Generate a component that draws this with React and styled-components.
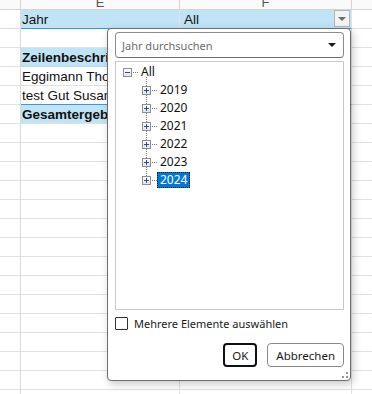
import React from 'react';
import styled, { createGlobalStyle } from 'styled-components';

const GlobalStyle = createGlobalStyle`
  html, body {
    margin: 0;
    padding: 0;
    background: #fff;
    overflow: hidden;
  }
  body {
    width: 372px;
    height: 394px;
  }
  * { box-sizing: border-box; }
`;

const years = ['2019', '2020', '2021', '2022', '2023', '2024'];

const rows = [
  { e: 'Jahr', f: 'All', fill: true, line: true, filter: true },
  { e: '' },
  { e: 'Zeilenbeschriftungen', fill: true, bold: true, soft: true },
  { e: 'Eggimann Thomas' },
  { e: 'test Gut Susanne', line: true },
  { e: 'Gesamtergebnis', fill: true, bold: true },
];

const App = () => {
  const emptyRows = Array.from({ length: 16 });

  return (
    <>
      <GlobalStyle />
      <Sheet>
        <Corner />
        <ColHead><span>E</span></ColHead>
        <ColHead><span>F</span></ColHead>
        <ColHead $last />

        {rows.map((r, i) => (
          <React.Fragment key={i}>
            <RowHead />
            <Cell $fill={r.fill} $bold={r.bold} $line={r.line} $soft={r.soft}>
              {r.e}
            </Cell>
            <Cell $fill={r.fill && r.f} $line={r.line} $pad={4}>
              {r.f}
              {r.filter && <FilterButton><Caret $color='#6a6a6a' /></FilterButton>}
            </Cell>
            <Cell $last />
          </React.Fragment>
        ))}

        {emptyRows.map((_, i) => (
          <React.Fragment key={'x' + i}>
            <RowHead />
            <Cell />
            <Cell />
            <Cell $last />
          </React.Fragment>
        ))}

        <Popup>
          <Search>
            <Placeholder>Jahr durchsuchen</Placeholder>
            <Caret $color='#1a1a1a' />
          </Search>

          <TreeBox>
            <TreeRow>
              <Expander $open />
              <Dots />
              <Label>All</Label>
            </TreeRow>
            <Children>
              {years.map((y) => (
                <TreeRow key={y} $indent>
                  <Expander />
                  <Dots />
                  <Label $selected={y === '2024'}>{y}</Label>
                </TreeRow>
              ))}
            </Children>
          </TreeBox>

          <CheckRow>
            <Check />
            <span>Mehrere Elemente auswählen</span>
          </CheckRow>

          <Buttons>
            <Button $primary>OK</Button>
            <Button>Abbrechen</Button>
          </Buttons>

          <Grip>
            <i /><i /><i />
          </Grip>
        </Popup>
      </Sheet>
    </>
  );
};

const Sheet = styled.div`
  position: relative;
  display: grid;
  grid-template-columns: 21px 159px 172px 1fr;
  grid-template-rows: 10px;
  grid-auto-rows: 19px;
  width: 372px;
  height: 394px;
  overflow: hidden;
  font-family: 'Liberation Sans', Arial, sans-serif;
`;

const Corner = styled.div`
  border-right: 1px solid #d4d4d4;
  border-bottom: 1px solid #d4d4d4;
  background: #fafafa;
`;

const ColHead = styled.div`
  display: flex;
  align-items: flex-end;
  justify-content: center;
  overflow: hidden;
  background: #fafafa;
  border-right: ${(p) => (p.$last ? 'none' : '1px solid #d4d4d4')};
  border-bottom: 1px solid #d4d4d4;
  color: #555;
  font-size: 13px;

  span {
    line-height: 14px;
    margin-bottom: -1px;
  }
`;

const RowHead = styled.div`
  border-right: 1px solid #dadada;
  border-bottom: 1px solid #e1e1e1;
`;

const Cell = styled.div`
  position: relative;
  display: flex;
  align-items: center;
  padding: 1px 0 0 ${(p) => p.$pad ?? 1}px;
  white-space: nowrap;
  overflow: hidden;
  font-size: 13.5px;
  font-weight: ${(p) => (p.$bold ? 700 : 400)};
  color: #111;
  background: ${(p) => (p.$fill ? '#c0e4f5' : '#fff')};
  border-right: ${(p) => (p.$last ? 'none' : '1px solid #e1e1e1')};
  border-bottom: 1px solid
    ${(p) => (p.$line ? '#3a9ad9' : p.$soft ? '#b5d9ee' : '#e1e1e1')};
`;

const FilterButton = styled.div`
  position: absolute;
  right: 1px;
  top: 0;
  width: 16px;
  height: 17px;
  display: flex;
  align-items: center;
  justify-content: center;
  background: #f3f3f3;
  border: 1px solid #b4b4b4;
`;

const Caret = styled.div`
  width: 0;
  height: 0;
  border-left: 4px solid transparent;
  border-right: 4px solid transparent;
  border-top: 4px solid ${(p) => p.$color};
`;

const Popup = styled.div`
  position: absolute;
  left: 107px;
  top: 28px;
  width: 244px;
  height: 353px;
  display: flex;
  flex-direction: column;
  padding: 3px 6px 0 7px;
  background: #fff;
  border: 1px solid #6e6e6e;
  border-radius: 4px;
  box-shadow: 2px 3px 8px rgba(0, 0, 0, 0.22);
  font-family: 'Noto Sans', 'Open Sans', sans-serif;
  font-size: 11px;
  color: #1a1a1a;
`;

const Search = styled.div`
  height: 26px;
  display: flex;
  align-items: center;
  justify-content: space-between;
  padding: 0 7px 0 6px;
  border: 1px solid #8d8d8d;
  border-bottom-color: #6f6f6f;
  border-radius: 4px;
`;

const Placeholder = styled.span`
  color: #6b6b6b;
`;

const TreeBox = styled.div`
  margin-top: 3px;
  height: 249px;
  padding: 1px 0 0 7px;
  border: 1px solid #c9c9c9;
`;

const TreeRow = styled.div`
  height: 18px;
  display: flex;
  align-items: center;
  padding-left: ${(p) => (p.$indent ? 19 : 0)}px;
`;

const Children = styled.div`
  position: relative;

  &::before {
    content: '';
    position: absolute;
    left: 23px;
    top: -4px;
    bottom: 9px;
    border-left: 1px dotted #7a7a7a;
  }
`;

const Expander = styled.div`
  position: relative;
  z-index: 1;
  width: 9px;
  height: 9px;
  flex: none;
  border: 1px solid #8f8f8f;
  background: linear-gradient(#ffffff, #e4e4e4);

  &::before {
    content: '';
    position: absolute;
    left: 1px;
    top: 3px;
    width: 5px;
    height: 1px;
    background: #2b4aa0;
  }

  &::after {
    content: '';
    display: ${(p) => (p.$open ? 'none' : 'block')};
    position: absolute;
    left: 3px;
    top: 1px;
    width: 1px;
    height: 5px;
    background: #2b4aa0;
  }
`;

const Dots = styled.div`
  width: 5px;
  margin: 0 0 0 1px;
  border-top: 1px dotted #7a7a7a;
`;

const Label = styled.span`
  height: 16px;
  line-height: 14px;
  padding: 0 2px;
  border: 1px dotted ${(p) => (p.$selected ? '#1a1a1a' : 'transparent')};
  background: ${(p) => (p.$selected ? '#0078d7' : 'transparent')};
  color: ${(p) => (p.$selected ? '#fff' : '#111')};
  font-size: 12px;
`;

const CheckRow = styled.div`
  margin-top: 7px;
  height: 13px;
  display: flex;
  align-items: center;
  gap: 6px;
`;

const Check = styled.div`
  width: 13px;
  height: 13px;
  border: 1px solid #333;
  border-radius: 1px;
`;

const Buttons = styled.div`
  margin-top: 13px;
  display: flex;
  justify-content: flex-end;
  gap: 10px;
`;

const Button = styled.div`
  height: 24px;
  display: flex;
  align-items: center;
  justify-content: center;
  padding: 0 ${(p) => (p.$primary ? 7 : 8)}px;
  min-width: 33px;
  border: ${(p) => (p.$primary ? '2px solid #111' : '1px solid #8a8a8a')};
  border-radius: 4px;
  font-size: 11.5px;
  color: #1a1a1a;
`;

const Grip = styled.div`
  position: absolute;
  right: 2px;
  bottom: 2px;
  width: 6px;
  height: 6px;

  i {
    position: absolute;
    width: 2px;
    height: 2px;
    background: #9a9a9a;
  }
  i:nth-child(1) { right: 0; top: 0; }
  i:nth-child(2) { right: 0; bottom: 0; }
  i:nth-child(3) { left: 0; bottom: 0; }
`;

export default App;
